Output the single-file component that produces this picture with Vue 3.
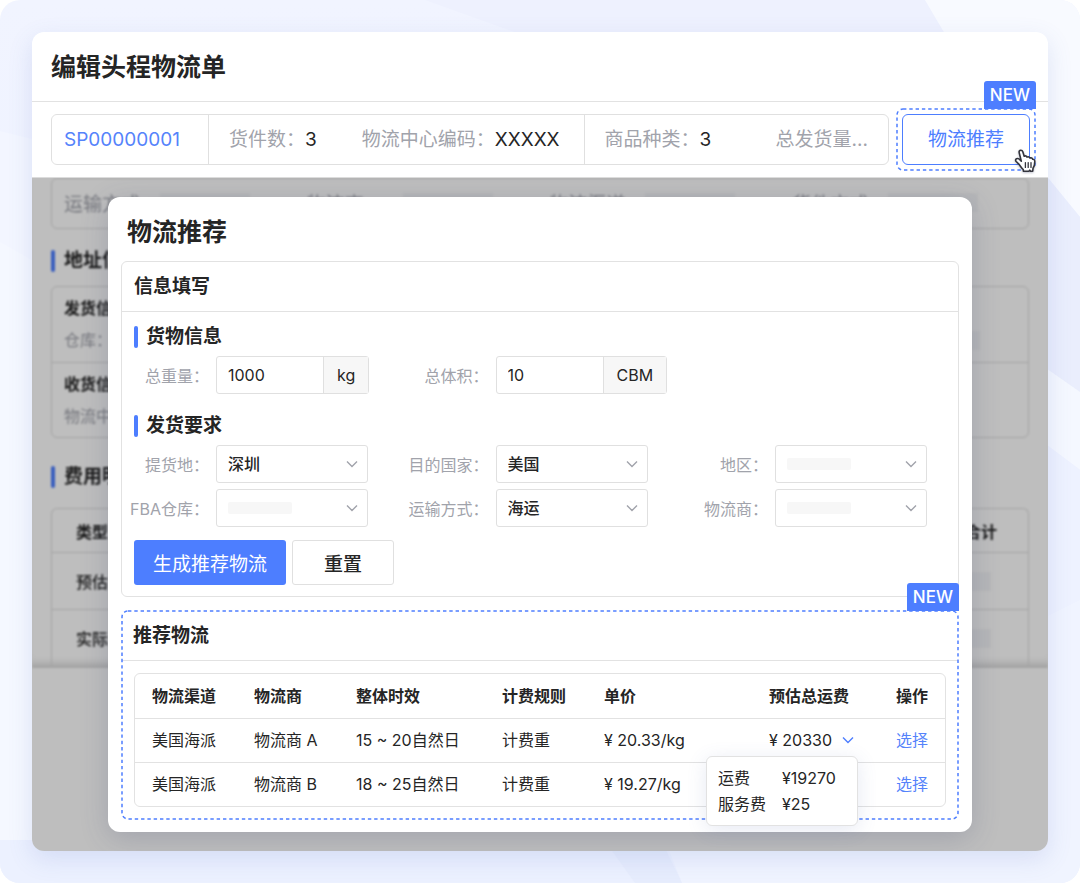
<script setup>
import { ref, reactive } from 'vue'

const weight = ref('1000')
const volume = ref('10')

const fieldRows = reactive([
  [
    { id: 'pickup', label: '提货地', value: '深圳' },
    { id: 'country', label: '目的国家', value: '美国' },
    { id: 'region', label: '地区', value: '' }
  ],
  [
    { id: 'fba', label: 'FBA仓库', value: '' },
    { id: 'mode', label: '运输方式', value: '海运' },
    { id: 'carrier', label: '物流商', value: '' }
  ]
])

const columns = ['物流渠道', '物流商', '整体时效', '计费规则', '单价', '预估总运费', '操作']
const plans = [
  { channel: '美国海派', carrier: '物流商 A', time: '15 ~ 20自然日', rule: '计费重', price: '¥ 20.33/kg', total: '¥ 20330' },
  { channel: '美国海派', carrier: '物流商 B', time: '18 ~ 25自然日', rule: '计费重', price: '¥ 19.27/kg', total: '' }
]
</script>

<template>
  <div class="stage">
    <svg class="backdrop" viewBox="0 0 1080 883" preserveAspectRatio="none" aria-hidden="true">
      <path d="M0 131 L60 146 V300 L0 242Z" fill="#f3f6ff" />
      <path d="M0 242 L60 276 V883 H0Z" fill="#f5f8ff" />
      <path d="M425 0 H925 L945 34 H520Z" fill="#eef1fe" />
      <path d="M925 0 H1080 V217 L1048 178 L990 110Z" fill="#f8faff" />
      <path d="M1040 168 L1080 217 V392 L1040 364Z" fill="#eaeefd" />
      <path d="M1040 364 L1080 392 V470 L1040 440Z" fill="#f5f8ff" />
      <path d="M1040 440 L1080 470 V620 L1040 640Z" fill="#eef2ff" />
      <path d="M1040 620 L1080 600 V883 H680 L660 840 H1040Z" fill="#f0f4ff" />
      <path d="M0 883 V840 H665 L682 883Z" fill="#ecf1ff" />
      <path d="M610 848 H665 L682 883 H635Z" fill="#e7edfd" />
    </svg>

    <main class="card">
      <header class="card-head"><h1>编辑头程物流单</h1></header>

      <section class="summary">
        <div class="info">
          <div class="info-group"><a href="#" class="link">SP00000001</a></div>
          <div class="info-group mid">
            <span><span class="muted">货件数：</span>3</span>
            <span><span class="muted">物流中心编码：</span>XXXXX</span>
          </div>
          <div class="info-group wide">
            <span><span class="muted">商品种类：</span>3</span>
            <span class="muted">总发货量...</span>
          </div>
        </div>
        <div class="highlight">
          <svg class="dash" aria-hidden="true"><rect x="1" y="1" rx="6" /></svg>
          <span class="badge">NEW</span>
          <button type="button" class="recommend">物流推荐</button>
          <svg class="cursor" viewBox="0 0 22 25" aria-hidden="true">
            <path
              d="M5.2 3.8C4.8 2.3 5.5 1.3 6.7 1.2C7.8 1.1 8.5 1.8 8.8 2.8L10.2 7.2C11.2 6.6 12.6 6.9 13.1 8.1C14.2 7.5 15.6 7.9 16 9.1C17.1 8.6 18.4 9.1 18.7 10.3C19.9 10.1 20.8 11 20.8 12.2C20.8 14.9 20.5 17.2 19 19.3L18.7 22.2H16.6L15.8 21.2L14.8 22.3H9.5L9.2 20.5C7.4 18.9 6.2 16.6 4.6 14.8L2.2 12.5C1.2 11.4 1.5 10.2 2.5 9.7C3.6 9.2 5.1 9.7 6.1 10.9L7.3 12.1Z"
              fill="#fff" stroke="#33343c" stroke-width="1.6" stroke-linejoin="round" />
            <path d="M11.4 13.6V18.4M14.2 13.6V18.4M17 13.6V18.4" stroke="#33343c" stroke-width="1.3" stroke-linecap="round" />
          </svg>
        </div>
      </section>

      <div class="body">
        <div class="page" aria-hidden="true">
          <div class="p-box p-line">
            <span>运输方式<i class="ph"></i></span>
            <span>物流商<i class="ph"></i></span>
            <span>物流渠道<i class="ph"></i></span>
            <span>货件方式<i class="ph"></i></span>
          </div>
          <h2 class="p-title">地址信息</h2>
          <div class="p-box p-address">
            <div><strong>发货信息</strong><p>仓库：<i class="ph"></i></p></div>
            <div><strong>收货信息</strong><p>物流中心：</p></div>
          </div>
          <h2 class="p-title">费用明细</h2>
          <div class="p-box p-cost">
            <div class="head"><strong>类型</strong><strong>合计</strong></div>
            <div><span>预估</span><i class="ph"></i></div>
            <div><span>实际</span><i class="ph"></i></div>
          </div>
        </div>
        <div class="mask"></div>

        <section class="modal" role="dialog" aria-labelledby="dialog-title">
          <h2 id="dialog-title" class="modal-title">物流推荐</h2>

          <form class="panel" @submit.prevent>
            <h3 class="panel-title">信息填写</h3>
            <h4 class="group-title">货物信息</h4>
            <div class="fields">
              <div class="field">
                <label for="weight">总重量：</label>
                <div class="input-group"><input id="weight" v-model="weight" type="text" /><span>kg</span></div>
              </div>
              <div class="field">
                <label for="volume">总体积：</label>
                <div class="input-group"><input id="volume" v-model="volume" type="text" /><span>CBM</span></div>
              </div>
            </div>
            <h4 class="group-title second">发货要求</h4>
            <div v-for="(row, i) in fieldRows" :key="i" class="fields">
              <div v-for="f in row" :key="f.id" class="field">
                <label :for="f.id">{{ f.label }}：</label>
                <div class="select">
                  <select :id="f.id" v-model="f.value">
                    <option :value="f.value">{{ f.value }}</option>
                  </select>
                  <span v-if="!f.value" class="empty"></span>
                  <svg class="chevron" viewBox="0 0 12 8" aria-hidden="true"><path d="M1 1.5L6 6.5L11 1.5" /></svg>
                </div>
              </div>
            </div>
            <div class="actions">
              <button type="submit" class="primary">生成推荐物流</button>
              <button type="reset" class="plain">重置</button>
            </div>
          </form>

          <section class="panel dashed">
            <svg class="dash" aria-hidden="true"><rect x="1" y="1" rx="6" /></svg>
            <span class="badge">NEW</span>
            <h3 class="panel-title">推荐物流</h3>
            <div class="table-wrap">
              <table>
                <colgroup>
                  <col class="c1" /><col class="c1" /><col class="c3" /><col class="c1" /><col class="c5" /><col class="c6" /><col />
                </colgroup>
                <thead>
                  <tr><th v-for="c in columns" :key="c" scope="col">{{ c }}</th></tr>
                </thead>
                <tbody>
                  <tr v-for="p in plans" :key="p.carrier">
                    <td>{{ p.channel }}</td>
                    <td>{{ p.carrier }}</td>
                    <td>{{ p.time }}</td>
                    <td>{{ p.rule }}</td>
                    <td>{{ p.price }}</td>
                    <td>
                      <div v-if="p.total" class="total">
                        <span>{{ p.total }}</span>
                        <svg class="chevron blue" viewBox="0 0 12 8" aria-hidden="true"><path d="M1 1.5L6 6.5L11 1.5" /></svg>
                        <dl class="tip">
                          <dt>运费</dt><dd>¥19270</dd>
                          <dt>服务费</dt><dd>¥25</dd>
                        </dl>
                      </div>
                    </td>
                    <td><a href="#" class="link">选择</a></td>
                  </tr>
                </tbody>
              </table>
            </div>
          </section>
        </section>
      </div>
    </main>
  </div>
</template>

<style>
body {
  background: #fff;
}
</style>

<style scoped>
* {
  box-sizing: border-box;
  margin: 0;
}
.stage {
  position: relative;
  padding: 32px;
  border-radius: 20px;
  overflow: hidden;
  background: linear-gradient(#f1f4ff, #eaf0ff);
  font-family: Inter, "Noto Sans CJK SC", sans-serif;
  color: #252525;
}
.backdrop {
  position: absolute;
  inset: 0;
  width: 100%;
  height: 100%;
}
.card {
  position: relative;
  border-radius: 12px;
  background: #fff;
  box-shadow: 0 8px 24px rgba(88, 112, 190, 0.16);
}
.card-head {
  display: flex;
  align-items: center;
  height: 70px;
  padding: 0 19px;
  border-bottom: 1px solid #e2e2e2;
}
h1,
.modal-title {
  font-size: 25px;
  line-height: 36px;
  font-weight: 700;
}
.summary {
  display: flex;
  align-items: center;
  gap: 7px;
  height: 76px;
  padding: 0 12px 0 19px;
  border-bottom: 1px solid #dcdcdc;
  font-size: 19px;
  line-height: 28px;
}
.info {
  display: flex;
  flex: 1;
  height: 51px;
  border: 1px solid #e0e0e0;
  border-radius: 6px;
}
.info-group {
  display: flex;
  align-items: center;
  gap: 45px;
  padding: 0 20px;
  white-space: nowrap;
}
.info-group:first-child {
  padding: 0 28px 0 12px;
}
.info-group.mid {
  padding-right: 24px;
}
.info-group + .info-group {
  border-left: 1px solid #e0e0e0;
}
.info-group.wide {
  flex: 1;
  justify-content: space-between;
}
.muted {
  color: #a1a3ab;
}
.link {
  color: #5583fb;
  text-decoration: none;
}
.highlight {
  position: relative;
  padding: 6px;
}
.dash {
  position: absolute;
  inset: 0;
  width: 100%;
  height: 100%;
  fill: none;
  stroke: #4d7eff;
  stroke-width: 1.5;
  stroke-dasharray: 3.4 2.9;
  pointer-events: none;
}
.dash rect {
  width: calc(100% - 2px);
  height: calc(100% - 2px);
}
.recommend {
  display: block;
  width: 128px;
  height: 51px;
  border: 1px solid #4d7eff;
  border-radius: 6px;
  background: #fff;
  color: #4d7eff;
  font: inherit;
}
.badge {
  position: absolute;
  right: 0;
  bottom: calc(100% - 1px);
  padding: 0 6px;
  border-radius: 3px 3px 0 0;
  background: #4d7eff;
  color: #fff;
  font-size: 17px;
  font-weight: 500;
  line-height: 28px;
}
.cursor {
  position: absolute;
  right: 0;
  bottom: -3px;
  width: 22px;
  height: 25px;
  fill: none;
  filter: drop-shadow(0 1px 1px rgba(40, 50, 90, 0.3));
}

/* Dimmed page with the dialog stacked over it */
.body {
  display: grid;
  overflow: hidden;
  border-radius: 0 0 12px 12px;
}
.page,
.mask,
.modal {
  grid-area: 1 / 1;
}
.mask {
  position: relative;
  background: rgba(0, 0, 0, 0.255);
}
.page {
  align-self: start;
  padding: 0 19px;
  background: #fff;
  border-bottom: 2px solid #dedede;
  box-shadow: inset 0 -8px 8px -6px #d4d4d4;
  filter: blur(1px);
}
.p-box {
  border: 1px solid #dcdcdc;
  border-radius: 6px;
}
.p-line {
  display: grid;
  grid-template-columns: repeat(4, 1fr);
  gap: 7px;
  align-items: center;
  height: 51px;
  padding: 0 0 3px 12px;
  font-size: 19px;
  color: #a1a3ab;
}
.p-line span {
  display: flex;
  align-items: center;
  justify-content: space-between;
  padding-right: 50px;
}
.ph {
  width: 90px;
  height: 19px;
  background: #f5f6f8;
}
.p-title {
  display: flex;
  align-items: center;
  gap: 9px;
  margin: 18px 0 11px;
  font-size: 19px;
  line-height: 28px;
  font-weight: 700;
}
.p-title::before,
.group-title::before {
  content: "";
  width: 4px;
  height: 22px;
  border-radius: 2px;
  background: #4d7eff;
}
.p-address > div {
  height: 75px;
  padding: 5px 12px;
  font-size: 16px;
  line-height: 32px;
}
.p-address > div + div {
  border-top: 1px solid #dcdcdc;
}
.p-address p {
  display: flex;
  align-items: center;
  justify-content: space-between;
  padding-right: 36px;
  color: #a1a3ab;
}
.p-address + .p-title {
  margin: 25px 0 17px;
}
.p-cost {
  border-bottom: 0;
  border-radius: 6px 6px 0 0;
  font-size: 16px;
  font-weight: 500;
}
.p-cost > div {
  display: flex;
  align-items: center;
  justify-content: space-between;
  height: 57px;
  padding: 0 37px 0 24px;
}
.p-cost > .head {
  height: 43px;
  padding-right: 31px;
}
.p-cost > div + div {
  border-top: 1px solid #dcdcdc;
}

.modal {
  position: relative;
  margin: 19px 76px;
  padding: 17px 13px 12px;
  border-radius: 12px;
  background: #fff;
  box-shadow: 0 6px 28px rgba(60, 70, 110, 0.22);
}
.modal-title {
  margin: 0 6px 11px;
}
.panel {
  position: relative;
  border: 1px solid #e2e2e2;
  border-radius: 6px;
  padding-bottom: 11px;
}
.panel-title {
  padding: 0 12px;
  border-bottom: 1px solid #e2e2e2;
  font-size: 19px;
  line-height: 49px;
  font-weight: 700;
}
.panel.dashed {
  margin-top: 13px;
  padding: 1px 1px 13px;
  border: 0;
}
.dashed .panel-title {
  padding: 0 11px;
}
.group-title {
  display: flex;
  align-items: center;
  gap: 8px;
  margin: 11px 12px 5px;
  font-size: 19px;
  line-height: 28px;
  font-weight: 700;
}
.group-title.second {
  margin-top: 18px;
}
.fields {
  display: grid;
  grid-template-columns: 1fr 1fr 277px;
}
.fields + .fields {
  margin-top: 6px;
}
.field {
  display: grid;
  grid-template-columns: 94px 1fr;
  align-items: center;
  font-size: 16px;
}
.field label {
  padding-right: 7px;
  text-align: right;
  white-space: nowrap;
  color: #a1a3ab;
}
.input-group {
  display: flex;
  justify-self: start;
  height: 38px;
  border: 1px solid #e0e0e0;
  border-radius: 3px;
}
.input-group input {
  width: 106px;
  padding: 0 11px;
  border: 0;
  background: none;
  color: inherit;
  font: inherit;
}
.input-group span {
  padding: 0 13px;
  border-left: 1px solid #e0e0e0;
  background: #f7f7f7;
  line-height: 36px;
}
.select {
  display: grid;
  align-items: center;
  width: 152px;
}
.select > * {
  grid-area: 1 / 1;
}
.select select {
  appearance: none;
  width: 100%;
  height: 38px;
  padding: 0 11px;
  border: 1px solid #e0e0e0;
  border-radius: 3px;
  background: #fff;
  color: inherit;
  font: inherit;
  font-weight: 500;
}
.select .empty {
  width: 64px;
  height: 12px;
  margin-left: 12px;
  border-radius: 2px;
  background: #f7f7f7;
}
.chevron {
  width: 12px;
  height: 8px;
  fill: none;
  stroke: #a1a3ab;
  stroke-width: 1.4;
}
.select .chevron {
  justify-self: end;
  margin-right: 10px;
  pointer-events: none;
}
.chevron.blue {
  stroke: #4d7eff;
}
.actions {
  display: flex;
  gap: 6px;
  margin: 13px 12px 0;
}
.actions button {
  height: 45px;
  border-radius: 3px;
  font: inherit;
  font-size: 19px;
}
.primary {
  width: 152px;
  border: 0;
  background: #4d7eff;
  color: #fff;
}
.actions .plain {
  width: 102px;
  border: 1px solid #e0e0e0;
  background: #fff;
  color: inherit;
  font-weight: 500;
}
.table-wrap {
  margin: 12px 12px 0;
  border: 1px solid #e2e2e2;
  border-radius: 6px;
}
table {
  width: 100%;
  table-layout: fixed;
  border-collapse: collapse;
  font-size: 16px;
  line-height: 24px;
}
.c1 {
  width: 102px;
}
.c3 {
  width: 146px;
}
.c5 {
  width: 165px;
}
.c6 {
  width: 127px;
}
th,
td {
  height: 44px;
  padding: 0 0 0 17px;
  text-align: left;
  white-space: nowrap;
}
th {
  font-weight: 700;
}
tbody tr {
  border-top: 1px solid #e2e2e2;
}
.total {
  position: relative;
  display: flex;
  align-items: center;
  gap: 10px;
}
.tip {
  position: absolute;
  z-index: 1;
  top: 28px;
  left: -63px;
  display: grid;
  grid-template-columns: 48px auto;
  gap: 2px 16px;
  width: 152px;
  padding: 9px 11px;
  border: 1px solid #e2e2e2;
  border-radius: 6px;
  background: #fff;
  box-shadow: 0 4px 20px rgba(80, 100, 170, 0.14);
}
</style>
